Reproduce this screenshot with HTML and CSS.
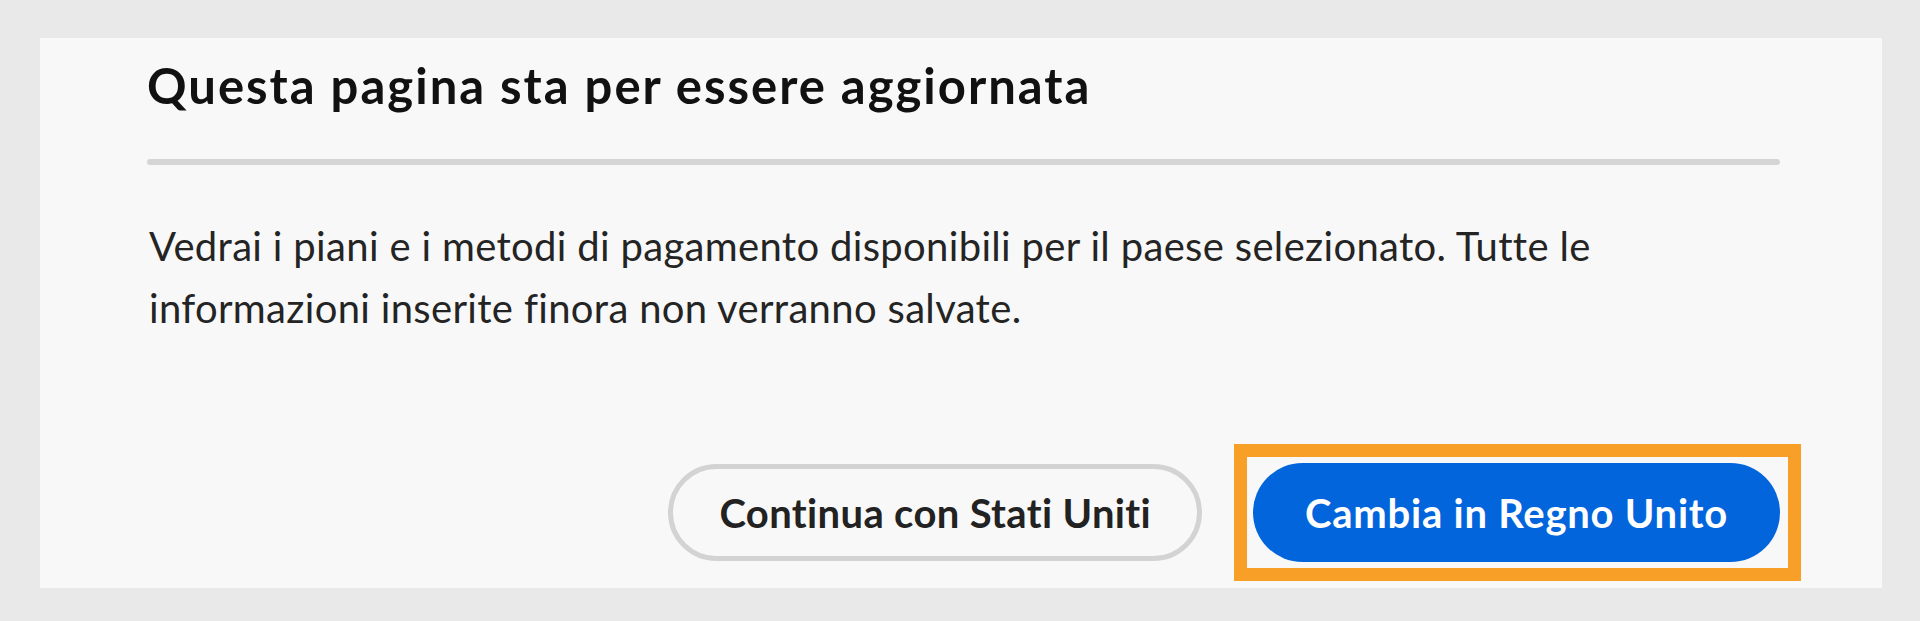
FILE: index.html
```html
<!DOCTYPE html>
<html lang="it">
<head>
<meta charset="utf-8">
<title>Questa pagina sta per essere aggiornata</title>
<link rel="stylesheet" href="styles.css">
</head>
<body>
  <section class="dialog" role="dialog" aria-labelledby="dlg-title">
    <h2 class="dialog-title" id="dlg-title">Questa pagina sta per essere aggiornata</h2>
    <hr class="dialog-divider">
    <p class="dialog-text">Vedrai i piani e i metodi di pagamento disponibili per il paese selezionato. Tutte le informazioni inserite finora non verranno salvate.</p>
    <div class="dialog-actions">
      <button class="btn btn-secondary" type="button">Continua con Stati Uniti</button>
      <button class="btn btn-primary is-highlighted" type="button">Cambia in Regno Unito</button>
    </div>
  </section>
</body>
</html>
```
FILE: styles.css
```css
html, body {
  margin: 0;
  height: 100%;
}

body {
  background: #e9e9e9;
  padding: 38px 38px 0 40px;
  box-sizing: border-box;
  font-family: "Lato", "Liberation Sans", sans-serif;
}

.dialog {
  background: #f8f8f8;
  height: 550px;
  box-sizing: border-box;
  padding: 18px 102px 26px 107px;
  display: flex;
  flex-direction: column;
}

.dialog-title {
  margin: 0;
  font-size: 49px;
  line-height: 59px;
  font-weight: 700;
  letter-spacing: 2px;
  color: #111;
}

.dialog-divider {
  margin: 44px 0 0 0;
  border: 0;
  height: 6px;
  border-radius: 3px;
  background: #d5d5d5;
}

.dialog-text {
  margin: 50px 0 0 2px;
  max-width: 1500px;
  font-size: 40px;
  line-height: 62px;
  letter-spacing: 0.33px;
  color: #242424;
}

.dialog-actions {
  margin-top: auto;
  display: flex;
  justify-content: flex-end;
  align-items: center;
  gap: 51px;
}

.btn {
  font-family: "Lato", "Liberation Sans", sans-serif;
  font-size: 40px;
  font-weight: 700;
  border-radius: 50px;
  cursor: pointer;
  box-sizing: border-box;
  white-space: nowrap;
}

.btn-secondary {
  height: 97px;
  padding: 0 46px;
  border: 5px solid #d3d3d3;
  background: transparent;
  color: #222;
  letter-spacing: 0.35px;
}

.btn-primary {
  height: 99px;
  padding: 0 52px;
  border: 0;
  background: #0265dc;
  color: #fff;
  letter-spacing: 0.75px;
}

.is-highlighted {
  position: relative;
}

.is-highlighted::after {
  content: "";
  position: absolute;
  top: -19px;
  bottom: -19px;
  left: -19px;
  right: -21px;
  border: 13px solid #f89f27;
  pointer-events: none;
}
```
